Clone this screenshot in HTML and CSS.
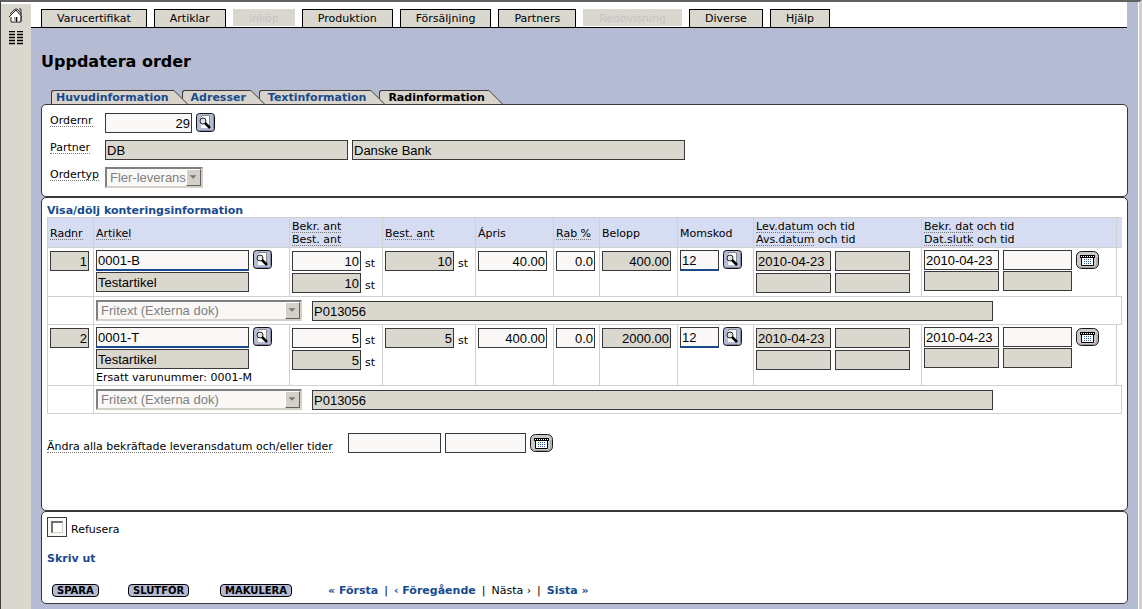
FILE: index.html
```html
<!DOCTYPE html>
<html lang="sv">
<head>
<meta charset="utf-8">
<title>Uppdatera order</title>
<link rel="stylesheet" href="styles.css">
</head>
<body>
<svg class="defs" aria-hidden="true">
  <symbol id="search" viewBox="0 0 19 19">
    <rect x=".5" y=".5" width="18" height="18" rx="3" fill="#b5bbd2" stroke="#101018"/>
    <path d="M2.500 17.500h14M17.500 2.500v14" stroke="#8388a0" fill="none"/>
    <path d="M5 2h9v13H5z" fill="#fff"/>
    <path d="M5.500 4V2.500h8V15" stroke="#888" fill="none"/>
    <circle cx="7" cy="8" r="3" fill="#e4e4e4" stroke="#222"/>
    <path d="M9 10l5 5" stroke="#000" stroke-width="2.500"/>
  </symbol>
  <symbol id="calendar" viewBox="0 0 23 18">
    <rect x=".5" y=".5" width="22" height="17" rx="5" fill="#c9cad0" stroke="#181818"/>
    <path d="M3 15.500q1 1 3 1h11q4 0 4-4V6" fill="none" stroke="#97999f"/>
    <path d="M5.500 6.500h12v8h-12z" fill="#fff" stroke="#000"/>
    <path d="M4 4h15v3H4z" fill="#000"/>
    <path d="M5 5.500h13" stroke="#fff" stroke-dasharray="1 1"/>
    <path d="M8 8.500h8M8 10.500h8M8 12.500h8" stroke="#36579b" stroke-dasharray="1 1"/>
  </symbol>
  <symbol id="slope" viewBox="0 0 14 14">
    <path d="M0 0L14 14H0z" fill="#d8d4cc"/>
    <path d="M0 .5L13.500 14" stroke="#3a383a" fill="none"/>
  </symbol>
</svg>

<div class="window">
  <aside class="sidebar">
    <a href="#" aria-label="Hem"><svg width="16" height="15" viewBox="0 0 16 15"><path d="M3 8v6h10V8" fill="#fff" stroke="#222"/><path d="M1 9l7-7 6 7" fill="#fff" stroke="#111"/><path d="M11 1h2v5M2 6l5-5h2l4 4v8" fill="none" stroke="#333"/><path d="M6 9h4v5H6z" fill="#aaa"/><path d="M8.500 9v5" stroke="#111"/></svg></a>
    <a href="#" aria-label="Lista"><svg width="16" height="14" viewBox="0 0 16 14"><path d="M1 .5h6m2 0h6M1 3.500h6m2 0h6M1 6.500h6m2 0h6M1 9.500h6m2 0h6M1 12.500h6m2 0h6" stroke="#000" stroke-width="1.500"/></svg></a>
  </aside>

  <main class="main">
    <nav class="menu">
      <a href="#">Varucertifikat</a>
      <a href="#">Artiklar</a>
      <span class="off">Inköp</span>
      <a href="#">Produktion</a>
      <a href="#">Försäljning</a>
      <a href="#">Partners</a>
      <span class="off">Redovisning</span>
      <a href="#">Diverse</a>
      <a href="#">Hjälp</a>
    </nav>

    <div class="content">
      <h1>Uppdatera order</h1>

      <nav class="tabs">
        <a href="#">Huvudinformation</a><svg><use href="#slope"/></svg>
        <a href="#">Adresser</a><svg><use href="#slope"/></svg>
        <a href="#">Textinformation</a><svg><use href="#slope"/></svg>
        <a href="#" class="current">Radinformation</a><svg><use href="#slope"/></svg>
      </nav>

      <section class="panel order">
        <div class="line">
          <label for="ordernr"><span class="hint">Ordernr</span></label>
          <input id="ordernr" class="w-order num" value="29">
          <button class="icon" type="button" aria-label="Sök order"><svg class="i-search"><use href="#search"/></svg></button>
        </div>
        <div class="line">
          <label for="partner"><span class="hint">Partner</span></label>
          <input id="partner" class="w-partner" value="DB" readonly>
          <input class="w-name" value="Danske Bank" aria-label="Partnernamn" readonly>
        </div>
        <div class="line">
          <label for="typ"><span class="hint">Ordertyp</span></label>
          <span class="select type"><select id="typ" disabled><option>Fler-leverans</option></select><svg class="arrow" viewBox="0 0 15 17"><path d="M3 6h8l-4 4z"/></svg></span>
        </div>
      </section>

      <section class="panel rows">
        <a class="link" href="#">Visa/dölj konteringsinformation</a>
        <table>
          <colgroup><col class="c46"><col class="c196"><col class="c93"><col class="c93"><col class="c78"><col class="c46"><col class="c78"><col class="c76"><col class="c168"><col class="c195"><col class="c5"></colgroup>
          <thead>
            <tr>
              <th><span class="hint">Radnr</span></th>
              <th><span class="hint">Artikel</span></th>
              <th><span class="hint">Bekr. ant</span><br><span class="hint">Best. ant</span></th>
              <th><span class="hint">Best. ant</span></th>
              <th>Ápris</th>
              <th><span class="hint">Rab %</span></th>
              <th>Belopp</th>
              <th>Momskod</th>
              <th><span class="hint">Lev.datum</span> och tid<br><span class="hint">Avs.datum</span> och tid</th>
              <th><span class="hint">Bekr. dat</span> och tid<br><span class="hint">Dat.slutk</span> och tid</th>
              <th class="edge"></th>
            </tr>
          </thead>
          <tbody>
            <tr class="item">
              <td><input class="w-39 num" value="1" aria-label="Radnr" readonly></td>
              <td class="high"><div class="pair"><input class="w-article key" value="0001-B" aria-label="Artikel"><button class="icon" type="button" aria-label="Sök artikel"><svg class="i-search"><use href="#search"/></svg></button></div><input class="w-article" value="Testartikel" aria-label="Benämning" readonly></td>
              <td><div class="pair"><input class="w-69 num" value="10" aria-label="Bekräftat antal"><span class="unit">st</span></div><div class="pair next"><input class="w-69 num" value="10" aria-label="Beställt antal" readonly><span class="unit">st</span></div></td>
              <td><div class="pair"><input class="w-69 num" value="10" aria-label="Best. ant" readonly><span class="unit">st</span></div></td>
              <td><input class="w-69 num" value="40.00" aria-label="Ápris"></td>
              <td><input class="w-39 num" value="0.0" aria-label="Rabatt"></td>
              <td><input class="w-69 num" value="400.00" aria-label="Belopp" readonly></td>
              <td class="high"><div class="pair"><input class="w-39 key" value="12" aria-label="Momskod"><button class="icon" type="button" aria-label="Sök momskod"><svg class="i-search"><use href="#search"/></svg></button></div></td>
              <td><div class="pair"><input class="w-75" value="2010-04-23" aria-label="Leveransdatum" readonly><input class="w-75" aria-label="Leveranstid" readonly></div><div class="pair next"><input class="w-75" aria-label="Avsändningsdatum" readonly><input class="w-75" aria-label="Avsändningstid" readonly></div></td>
              <td class="high"><div class="pair"><input class="w-75" value="2010-04-23" aria-label="Bekräftat datum"><input class="w-69" aria-label="Bekräftad tid"><button class="icon" type="button" aria-label="Kalender"><svg class="i-cal"><use href="#calendar"/></svg></button></div><div class="pair close"><input class="w-75" aria-label="Slutdatum" readonly><input class="w-69" aria-label="Sluttid" readonly></div></td>
              <td class="edge"></td>
            </tr>
            <tr class="note">
              <td></td>
              <td colspan="10"><div class="text"><span class="select wide"><select aria-label="Texttyp" disabled><option>Fritext (Externa dok)</option></select><svg class="arrow" viewBox="0 0 15 17"><path d="M3 6h8l-4 4z"/></svg></span><input class="w-text" value="P013056" aria-label="Text" readonly></div></td>
            </tr>
            <tr class="item">
              <td><input class="w-39 num" value="2" aria-label="Radnr" readonly></td>
              <td class="high"><div class="pair"><input class="w-article key" value="0001-T" aria-label="Artikel"><button class="icon" type="button" aria-label="Sök artikel"><svg class="i-search"><use href="#search"/></svg></button></div><input class="w-article" value="Testartikel" aria-label="Benämning" readonly><div class="sub">Ersatt varunummer: 0001-M</div></td>
              <td><div class="pair"><input class="w-69 num" value="5" aria-label="Bekräftat antal"><span class="unit">st</span></div><div class="pair next"><input class="w-69 num" value="5" aria-label="Beställt antal" readonly><span class="unit">st</span></div></td>
              <td><div class="pair"><input class="w-69 num" value="5" aria-label="Best. ant" readonly><span class="unit">st</span></div></td>
              <td><input class="w-69 num" value="400.00" aria-label="Ápris"></td>
              <td><input class="w-39 num" value="0.0" aria-label="Rabatt"></td>
              <td><input class="w-69 num" value="2000.00" aria-label="Belopp" readonly></td>
              <td class="high"><div class="pair"><input class="w-39 key" value="12" aria-label="Momskod"><button class="icon" type="button" aria-label="Sök momskod"><svg class="i-search"><use href="#search"/></svg></button></div></td>
              <td><div class="pair"><input class="w-75" value="2010-04-23" aria-label="Leveransdatum" readonly><input class="w-75" aria-label="Leveranstid" readonly></div><div class="pair next"><input class="w-75" aria-label="Avsändningsdatum" readonly><input class="w-75" aria-label="Avsändningstid" readonly></div></td>
              <td class="high"><div class="pair"><input class="w-75" value="2010-04-23" aria-label="Bekräftat datum"><input class="w-69" aria-label="Bekräftad tid"><button class="icon" type="button" aria-label="Kalender"><svg class="i-cal"><use href="#calendar"/></svg></button></div><div class="pair close"><input class="w-75" aria-label="Slutdatum" readonly><input class="w-69" aria-label="Sluttid" readonly></div></td>
              <td class="edge"></td>
            </tr>
            <tr class="note">
              <td></td>
              <td colspan="10"><div class="text"><span class="select wide"><select aria-label="Texttyp" disabled><option>Fritext (Externa dok)</option></select><svg class="arrow" viewBox="0 0 15 17"><path d="M3 6h8l-4 4z"/></svg></span><input class="w-text" value="P013056" aria-label="Text" readonly></div></td>
            </tr>
          </tbody>
        </table>
        <div class="pair all">
          <label for="alldate"><span class="hint">Ändra alla bekräftade leveransdatum och/eller tider</span></label>
          <input id="alldate" class="w-93"><input class="w-81" aria-label="Tid"><button class="icon" type="button" aria-label="Kalender"><svg class="i-cal"><use href="#calendar"/></svg></button>
        </div>
      </section>

      <section class="panel foot">
        <div class="pair refuse"><input type="checkbox" id="refuse"><label for="refuse">Refusera</label></div>
        <a class="link print" href="#">Skriv ut</a>
        <div class="actions">
          <button class="pill" type="button">SPARA</button>
          <button class="pill" type="button">SLUTFÖR</button>
          <button class="pill" type="button">MAKULERA</button>
          <div class="pages"><a class="link" href="#">« Första</a><span>|</span><a class="link" href="#">‹ Föregående</a><span>|</span><span>Nästa ›</span><span>|</span><a class="link" href="#">Sista »</a></div>
        </div>
      </section>
    </div>
  </main>
</div>
</body>
</html>
```
FILE: styles.css
```css
*, *::before { box-sizing: border-box; }

body {
  margin: 0;
  background: #b5bbd2;
  font: 11px/13px Verdana, "DejaVu Sans", sans-serif;
  color: #000;
}

.defs { display: none; }
svg { display: block; flex: none; }

.window {
  display: flex;
  min-height: 100vh;
  border-top: 2px solid #606060;
  border-left: 1px solid #404040;
  border-right: 3px solid #d4d0c8;
}

.sidebar {
  display: flex;
  flex-direction: column;
  gap: 8px;
  width: 30px;
  flex: none;
  padding: 4px 0 0 7px;
  border-top: 2px solid #fff;
  background: #dad7cf;
}

.main { flex: 1; min-width: 0; border-right: 1px solid #fff; }

.menu {
  display: flex;
  gap: 7px;
  margin-right: 11px;
  padding: 7px 0 0 10px;
  background: #fff;
  border-bottom: 1px solid #000;
}
.menu a, .menu .off {
  padding: 2px 15px;
  border: 1px solid #000;
  border-bottom: 0;
  background: #dad7cf;
  color: #000;
  text-decoration: none;
}
.menu .off {
  margin-bottom: 1px;
  padding-bottom: 1px;
  border-color: #dad7cf;
  color: #c4c4c6;
}

.content { padding: 0 10px 5px; }

h1 {
  margin: 24px 0 18px;
  font-size: 16px;
  line-height: 20px;
}

.tabs { display: flex; padding-left: 10px; }
.tabs a {
  height: 14px;
  margin-left: -6px;
  padding-left: 8px;
  padding-right: 4px;
  border: 1px solid #3a383a;
  border-width: 1px 0 0 1px;
  border-top-left-radius: 3px;
  background: #d8d4cc;
  color: #184a8c;
  font-weight: bold;
  text-decoration: none;
}
.tabs a:first-child { margin-left: 0; padding-left: 4px; }
.tabs a:not(.current) { padding-right: 5px; }
.tabs .current { color: #000; }
.tabs svg { position: relative; width: 14px; height: 14px; }

.panel {
  background: #fff;
  border: 1px solid #3a383a;
  border-radius: 5px;
}

.hint {
  display: inline-block;
  height: 13px;
  border-bottom: 1px dotted #777;
}
.link { color: #184a8c; font-weight: bold; text-decoration: none; }

input, select {
  height: 20px;
  margin: 0;
  padding: 0 1px;
  border: 1px solid #3a383a;
  border-radius: 0;
  background: #f9f8f6;
  color: #000;
  font: 13px/18px Arial, "Liberation Sans", sans-serif;
}
input { display: block; flex: none; }
input:read-only:not([type="checkbox"]) { background: #dad7cf; }
.num { text-align: right; }
.key { height: 21px; border-bottom: 2px solid #184a8c; }

.select {
  display: inline-flex;
  height: 21px;
  border: 2px solid #808080;
  border-right-color: #d4d0c8;
  border-bottom-color: #d4d0c8;
  background: #f9f8f6;
}
.select select {
  flex: 1;
  min-width: 0;
  height: 17px;
  padding: 0 0 0 3px;
  border: 0;
  appearance: none;
  color: #808080;
  opacity: 1;
  line-height: 17px;
}
.arrow {
  width: 15px;
  height: 17px;
  background: #d4d0c8;
  border: 1px solid #fff;
  border-right-color: #606060;
  border-bottom-color: #606060;
  fill: #777;
}

.icon { flex: none; padding: 0; border: 0; background: none; }
.i-search { width: 19px; height: 19px; }
.i-cal { width: 23px; height: 18px; }

.w-order { width: 87px; }
.w-partner { width: 243px; }
.w-name { width: 333px; }
.w-article { width: 153px; }
.w-39 { width: 39px; }
.w-69 { width: 69px; }
.w-75 { width: 75px; }
.w-81 { width: 81px; }
.w-93 { width: 93px; }
.w-text { width: 681px; }
.type { width: 98px; }
.wide { width: 206px; }

.order {
  display: flex;
  flex-direction: column;
  gap: 7px;
  padding: 8px;
}
.line { display: flex; align-items: flex-start; gap: 4px; }
.line label { width: 51px; padding-top: 1px; }

.rows { padding: 6px 6px 57px 5px; }
.rows > .link { display: block; }

table { width: 100%; border-collapse: collapse; table-layout: fixed; }
.c46 { width: 46px; }
.c196 { width: 196px; }
.c93 { width: 93px; }
.c78 { width: 78px; }
.c76 { width: 76px; }
.c168 { width: 168px; }
.c195 { width: 195px; }
.c5 { width: 5px; }
th, td { border: 1px solid #d0d0d0; padding: 3px 0 0 2px; vertical-align: top; }
th {
  padding: 2px 0 1px 2px;
  background: #d6dcf1;
  font-weight: normal;
  text-align: left;
  vertical-align: middle;
  white-space: nowrap;
}
.item { height: 49px; }
.item td { padding-bottom: 1px; }
.item .high { padding-top: 2px; }
.note td { padding-bottom: 3px; }
th.edge { padding: 0; border-right-color: #d6dcf1; }
.item .edge { padding: 0; border-right: 0; }

.pair { display: flex; gap: 4px; }
.pair .icon { align-self: center; }
.next { margin-top: 2px; }
.close { margin-top: 1px; }
.pair .key + .icon { align-self: flex-start; }
.unit { align-self: flex-end; padding-bottom: 1px; }
.pair + .w-article { margin-top: 1px; }
.sub { padding-top: 2px; }

.text { display: flex; gap: 10px; align-items: flex-end; }

.all { margin-top: 19px; }
.all label { min-width: 297px; padding-top: 7px; }

.foot { padding: 5px 10px 6px 5px; }
.refuse label { padding-top: 6px; }
[type="checkbox"] {
  width: 20px;
  height: 20px;
  padding: 3px;
  appearance: none;
}
[type="checkbox"]::before {
  content: "";
  display: block;
  width: 12px;
  height: 12px;
  border: 2px solid #707070;
  border-right: 1px solid #d4d0c8;
  border-bottom: 1px solid #d4d0c8;
  background: #fff;
}
.print { display: block; margin-top: 15px; }

.actions {
  display: grid;
  grid-template-columns: 76px 92px 108px auto;
  align-items: center;
  justify-items: start;
  margin-top: 19px;
  padding-left: 5px;
}
.pill {
  height: 13px;
  padding: 0 4px;
  border: 1px solid #000;
  border-radius: 4px;
  background: #b5bbd2;
  font: bold 10px/11px Verdana, "DejaVu Sans", sans-serif;
}
.pages { display: flex; gap: 6px; }
```
